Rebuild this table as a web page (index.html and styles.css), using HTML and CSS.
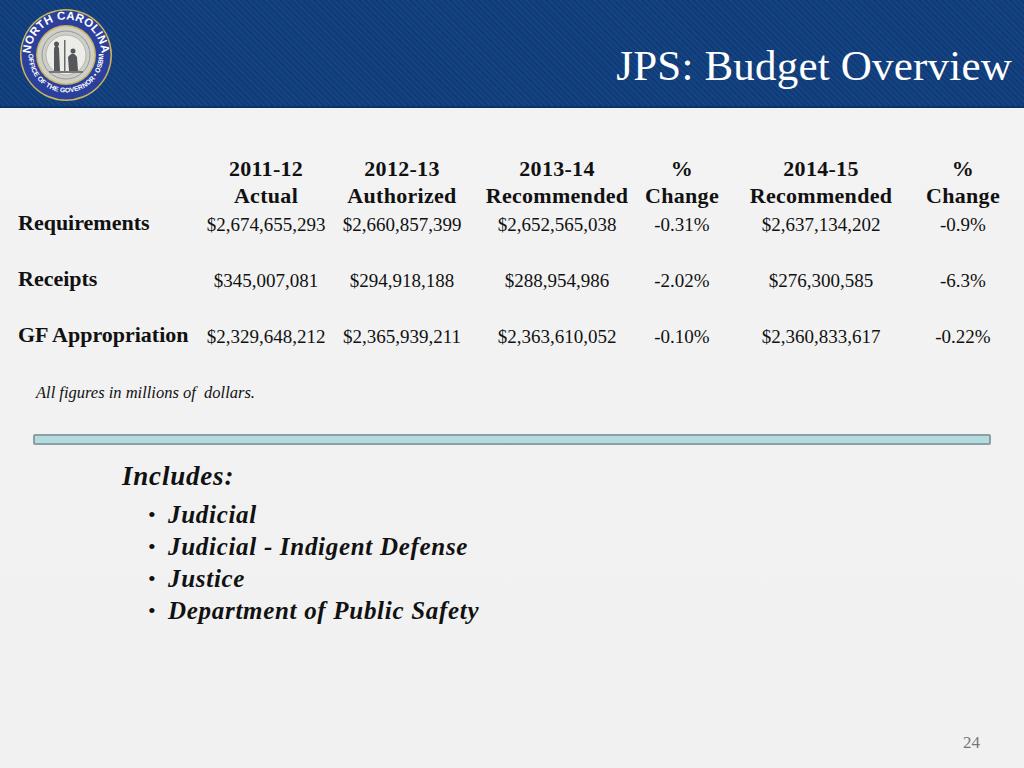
FILE: index.html
```html
<!DOCTYPE html>
<html>
<head>
<meta charset="utf-8">
<link rel="stylesheet" href="styles.css">
</head>
<body>
<div class="slide">
  <header class="banner">
    <svg class="seal" width="96" height="96" viewBox="0 0 96 96">
      <defs>
        <path id="topArc" d="M 12.5 48 A 35.5 35.5 0 0 1 83.5 48"/>
        <path id="botArc" d="M 10.5 48 A 37.5 37.5 0 0 0 85.5 48"/>
      </defs>
      <circle cx="48" cy="48" r="46" fill="#c9b45a"/>
      <circle cx="48" cy="48" r="44.5" fill="#2b3f9c"/>
      <circle cx="48" cy="48" r="30" fill="#c9b45a"/>
      <circle cx="48" cy="48" r="28.5" fill="#cfcfca"/>
      <circle cx="48" cy="48" r="24" fill="none" stroke="#8a8a86" stroke-width="0.8"/>
      <circle cx="48" cy="48" r="20" fill="#ececE8" stroke="#9a9a96" stroke-width="0.6"/>
      <path d="M36 64 L36 42 Q38 35 41 41 L42 64 Z" fill="#55585a"/>
      <circle cx="38.5" cy="37" r="2.5" fill="#55585a"/>
      <path d="M51 64 L50 50 Q55 43 59 50 L60 64 Z" fill="#55585a"/>
      <circle cx="55" cy="44" r="2.5" fill="#55585a"/>
      <rect x="46" y="33" width="1.5" height="31" fill="#6a6a6a"/>
      <rect x="31" y="64" width="34" height="2" fill="#777"/>
      <text class="seal-top"><textPath href="#topArc" startOffset="50%" text-anchor="middle">NORTH CAROLINA</textPath></text>
      <text class="seal-bot"><textPath href="#botArc" startOffset="50%" text-anchor="middle">OFFICE OF THE GOVERNOR • OSBM</textPath></text>
    </svg>
    <h1 class="title">JPS: Budget Overview</h1>
  </header>

  <main class="content">
    <div class="budget">
      <div class="cell label"></div>
      <div class="cell head">2011-12<br>Actual</div>
      <div class="cell head">2012-13<br>Authorized</div>
      <div class="cell head">2013-14<br>Recommended</div>
      <div class="cell head">%<br>Change</div>
      <div class="cell head">2014-15<br>Recommended</div>
      <div class="cell head">%<br>Change</div>

      <div class="cell label">Requirements</div>
      <div class="cell num">$2,674,655,293</div>
      <div class="cell num">$2,660,857,399</div>
      <div class="cell num">$2,652,565,038</div>
      <div class="cell num">-0.31%</div>
      <div class="cell num">$2,637,134,202</div>
      <div class="cell num">-0.9%</div>

      <div class="cell label">Receipts</div>
      <div class="cell num">$345,007,081</div>
      <div class="cell num">$294,918,188</div>
      <div class="cell num">$288,954,986</div>
      <div class="cell num">-2.02%</div>
      <div class="cell num">$276,300,585</div>
      <div class="cell num">-6.3%</div>

      <div class="cell label">GF Appropriation</div>
      <div class="cell num">$2,329,648,212</div>
      <div class="cell num">$2,365,939,211</div>
      <div class="cell num">$2,363,610,052</div>
      <div class="cell num">-0.10%</div>
      <div class="cell num">$2,360,833,617</div>
      <div class="cell num">-0.22%</div>
    </div>

    <p class="note">All figures in millions of&nbsp; dollars.</p>

    <div class="divider"></div>

    <section class="includes">
      <h2 class="inc-title">Includes:</h2>
      <ul class="inc-list">
        <li>Judicial</li>
        <li>Judicial - Indigent Defense</li>
        <li>Justice</li>
        <li>Department of Public Safety</li>
      </ul>
    </section>
  </main>

  <footer class="pagenum">24</footer>
</div>
</body>
</html>
```

FILE: styles.css
```css
html, body {
  margin: 0;
  padding: 0;
}
body {
  width: 1024px;
  height: 768px;
  overflow: hidden;
  background: #f2f2f2;
  font-family: "Liberation Serif", "Times New Roman", serif;
  color: #111;
}
.slide {
  width: 1024px;
  height: 768px;
  display: flex;
  flex-direction: column;
  background: linear-gradient(180deg, #f3f3f3 0%, #f1f1f1 100%);
}
.banner {
  height: 106px;
  flex: 0 0 auto;
  display: flex;
  align-items: center;
  justify-content: space-between;
  padding: 0 12px 0 18px;
  background-color: #103d7c;
  background-image: repeating-linear-gradient(45deg, #0f3b79 0px, #0f3b79 2px, #164381 2px, #164381 4px);
  border-bottom: 2px solid #0b3269;
}
.seal {
  display: block;
  margin-top: 4px;
}
.seal-top {
  font-family: "Liberation Sans", Arial, sans-serif;
  font-size: 11.5px;
  font-weight: bold;
  fill: #ffffff;
  letter-spacing: 0.3px;
}
.seal-bot {
  font-family: "Liberation Sans", Arial, sans-serif;
  font-size: 6.8px;
  font-weight: bold;
  fill: #ffffff;
}
.title {
  margin: 0;
  margin-top: 24px;
  font-weight: normal;
  font-size: 43px;
  color: #ffffff;
  letter-spacing: 0.2px;
}
.content {
  flex: 1 1 auto;
  display: flex;
  flex-direction: column;
}
.budget {
  display: grid;
  grid-template-columns: 180px 136px 136px 174px 76px 202px 82px;
  grid-template-rows: 56px 56px 56px 56px;
  margin: 47px 0 0 18px;
}
.cell {
  font-size: 19px;
  line-height: 27px;
}
.head {
  text-align: center;
  font-weight: bold;
  font-size: 22px;
  letter-spacing: 0.3px;
}
.label {
  font-weight: bold;
  font-size: 22px;
  margin-top: -2px;
}
.num {
  text-align: center;
}
.note {
  margin: 4px 0 0 36px;
  font-style: italic;
  font-size: 16.5px;
  line-height: 20px;
}
.divider {
  margin: 31px 0 0 33px;
  width: 954px;
  height: 7px;
  background: #b3dbe0;
  border: 2px solid #8aa0a4;
  border-radius: 2px;
}
.includes {
  margin: 16px 0 0 122px;
}
.inc-title {
  margin: 0;
  font-size: 27px;
  font-weight: bold;
  font-style: italic;
  letter-spacing: 0.8px;
  line-height: 30px;
}
.inc-list {
  margin: 8px 0 0 26px;
  padding: 0;
  list-style: none;
}
.inc-list li {
  font-size: 25px;
  font-weight: bold;
  font-style: italic;
  letter-spacing: 0.7px;
  line-height: 32px;
  position: relative;
  padding-left: 20px;
}
.inc-list li::before {
  content: "•";
  position: absolute;
  left: 0;
  font-style: normal;
  font-weight: normal;
  font-size: 22px;
}
.pagenum {
  flex: 0 0 auto;
  align-self: flex-end;
  margin: 0 44px 15px 0;
  font-size: 17px;
  color: #777777;
}
```
